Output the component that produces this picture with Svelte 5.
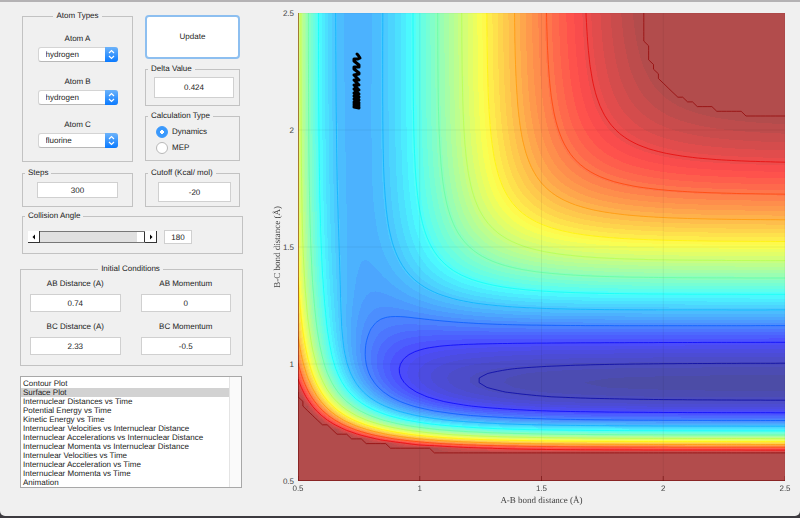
<script lang="ts">
    import { onMount } from "svelte";

    // plot area in user units, both axes run from 0.5 to 2.5 angstrom
    const W = 487;
    const H = 468;
    const MIN = 0.5;
    const MAX = 2.5;
    const STEP = 0.02;
    const N = Math.round((MAX - MIN) / STEP);
    const BANDS = 60;
    const SATO = 0.18;

    const HH = { d: 109.5, beta: 1.942, r: 0.742 };
    const HF = { d: 141.2, beta: 2.2187, r: 0.917 };

    const ticks = [0.5, 1, 1.5, 2, 2.5];
    const elements = ["hydrogen", "fluorine", "chlorine", "oxygen"];
    const plotTypes = [
        "Contour Plot",
        "Surface Plot",
        "Internuclear Distances vs Time",
        "Potential Energy vs Time",
        "Kinetic Energy vs Time",
        "Internuclear Velocities vs Internuclear Distance",
        "Internuclear Accelerations vs Internuclear Distance",
        "Internuclear Momenta vs Internuclear Distance",
        "Internulear Velocities vs Time",
        "Internuclear Acceleration vs Time",
        "Internuclear Momenta vs Time",
        "Animation",
    ];

    let atoms = [
        { name: "A", value: "hydrogen" },
        { name: "B", value: "hydrogen" },
        { name: "C", value: "fluorine" },
    ];
    let initial = [
        { label: "AB Distance (A)", value: "0.74" },
        { label: "AB Momentum", value: "0" },
        { label: "BC Distance (A)", value: "2.33" },
        { label: "BC Momentum", value: "-0.5" },
    ];
    let delta = "0.424";
    let calcType = "Dynamics";
    let steps = "300";
    let cutoff = "-20";
    let angle = 180;
    let canvas: HTMLCanvasElement;

    const trajectory = [
        [59, 41], [60, 42], [62, 45], [60, 46], [56, 46], [56, 48], [61, 52],
        [61, 54], [56, 54], [56, 56], [61, 60], [61, 61], [56, 62], [61, 67],
        [56, 67], [61, 72], [56, 72], [61, 77], [56, 76], [61, 81], [56, 80],
        [61, 84], [56, 83], [61, 87], [56, 86], [61, 90], [56, 89], [61, 92],
        [56, 91], [61, 94], [56, 93], [61, 95], [56, 94],
    ];

    function bond({ d, beta, r }, x: number) {
        const e = Math.exp(-beta * (x - r));
        const singlet = d * (e * e - 2 * e);
        const triplet = (d / 2) * (e * e + 2 * e) * ((1 - SATO) / (1 + SATO));
        return [(singlet + triplet) / 2, (singlet - triplet) / 2];
    }

    function potential(ab: number, bc: number) {
        const [q1, j1] = bond(HH, ab);
        const [q2, j2] = bond(HF, bc);
        const [q3, j3] = bond(HF, ab + bc);
        const j = (j1 - j2) ** 2 + (j2 - j3) ** 2 + (j3 - j1) ** 2;
        return q1 + q2 + q3 - Math.sqrt(j / 2);
    }

    function makeGrid(top: number) {
        const rows = [];
        for (let j = 0; j <= N; j++) {
            const row = [];
            for (let i = 0; i <= N; i++) {
                row.push(Math.min(top, potential(MIN + i * STEP, MIN + j * STEP)));
            }
            rows.push(row);
        }
        return rows;
    }

    function jet(t: number) {
        const c = (m: number) =>
            Math.round(255 * Math.max(0, Math.min(1, 1.5 - Math.abs(4 * t - m))));
        return [c(3), c(2), c(1)];
    }

    // marching squares, every cell adds its own short segments
    function contour(grid: number[][], level: number) {
        let d = "";
        const px = (i: number) => ((i / N) * W).toFixed(1);
        const py = (j: number) => (H - (j / N) * H).toFixed(1);
        for (let j = 0; j < N; j++) {
            for (let i = 0; i < N; i++) {
                const corners = [
                    [i, j, grid[j][i]],
                    [i + 1, j, grid[j][i + 1]],
                    [i + 1, j + 1, grid[j + 1][i + 1]],
                    [i, j + 1, grid[j + 1][i]],
                ];
                const hits = [];
                for (let k = 0; k < 4; k++) {
                    const [x1, y1, v1] = corners[k];
                    const [x2, y2, v2] = corners[(k + 1) % 4];
                    if (v1 < level !== v2 < level) {
                        const t = (level - v1) / (v2 - v1);
                        hits.push(`${px(x1 + t * (x2 - x1))} ${py(y1 + t * (y2 - y1))}`);
                    }
                }
                for (let k = 0; k + 1 < hits.length; k += 2) {
                    d += `M${hits[k]}L${hits[k + 1]}`;
                }
            }
        }
        return d;
    }

    const top = -22.6;
    const bottom = -141.2;
    const shade = (v: number) => (v - bottom) / (top + 2 - bottom);
    const grid = makeGrid(top);
    const lines = [top, ...Array.from({ length: 11 }, (_, k) => -32.8 - 10.4 * k)].map(
        (level) => ({
            d: contour(grid, level),
            color: `rgb(${jet(shade(level)).join()})`,
        })
    );

    onMount(() => {
        const ctx = canvas.getContext("2d");
        const img = ctx.createImageData(W, H);
        for (let y = 0; y < H; y++) {
            for (let x = 0; x < W; x++) {
                const gx = ((x + 0.5) / W) * N;
                const gy = (1 - (y + 0.5) / H) * N;
                const i = Math.floor(gx);
                const j = Math.floor(gy);
                const u = gx - i;
                const w = gy - j;
                const v =
                    (grid[j][i] * (1 - u) + grid[j][i + 1] * u) * (1 - w) +
                    (grid[j + 1][i] * (1 - u) + grid[j + 1][i + 1] * u) * w;
                const rgb = jet(Math.round(shade(v) * BANDS) / BANDS);
                const o = (y * W + x) * 4;
                for (let k = 0; k < 3; k++) {
                    img.data[o + k] = rgb[k] * 0.7 + 76;
                }
                img.data[o + 3] = 255;
            }
        }
        ctx.putImageData(img, 0, 0);
    });

    const pos = (v: number, size: number) => ((v - MIN) / (MAX - MIN)) * size;
</script>

<main>
    <form class="controls" on:submit|preventDefault>
        <div class="row">
            <fieldset class="atoms">
                <legend class="center">Atom Types</legend>
                {#each atoms as atom}
                    <label>
                        <span>Atom {atom.name}</span>
                        <span class="popup">
                            <select bind:value={atom.value}>
                                {#each elements as element}
                                    <option>{element}</option>
                                {/each}
                            </select>
                            <svg viewBox="0 0 13 15">
                                <path d="M4 6L6.5 3.5L9 6M4 9L6.5 11.5L9 9" />
                            </svg>
                        </span>
                    </label>
                {/each}
            </fieldset>
            <div class="side">
                <button class="update">Update</button>
                <fieldset class="delta">
                    <legend>Delta Value</legend>
                    <div class="field">
                        <input type="text" aria-label="Delta Value" bind:value={delta} />
                    </div>
                </fieldset>
                <fieldset class="calc">
                    <legend>Calculation Type</legend>
                    {#each ["Dynamics", "MEP"] as type}
                        <label>
                            <input type="radio" name="calc" value={type} bind:group={calcType} />
                            {type}
                        </label>
                    {/each}
                </fieldset>
            </div>
        </div>

        <div class="row second">
            <fieldset class="steps">
                <legend>Steps</legend>
                <div class="field">
                    <input type="text" aria-label="Steps" bind:value={steps} />
                </div>
            </fieldset>
            <fieldset class="cutoff">
                <legend>Cutoff (Kcal/ mol)</legend>
                <div class="field">
                    <input type="text" aria-label="Cutoff" bind:value={cutoff} />
                </div>
            </fieldset>
        </div>

        <fieldset class="collision">
            <legend>Collision Angle</legend>
            <div class="angle">
                <div class="slider">
                    <button type="button" aria-label="Decrease angle" on:click={() => (angle -= 1)}>
                        <svg viewBox="0 0 12 12"><path d="M4.5 6L7 3.5V8.5Z" /></svg>
                    </button>
                    <input type="range" min="0" max="180" aria-label="Collision Angle" bind:value={angle} />
                    <button type="button" aria-label="Increase angle" on:click={() => (angle += 1)}>
                        <svg viewBox="0 0 12 12"><path d="M7.5 6L5 3.5V8.5Z" /></svg>
                    </button>
                </div>
                <input type="text" aria-label="Collision Angle value" bind:value={angle} />
            </div>
        </fieldset>

        <fieldset class="initial">
            <legend class="center">Initial Conditions</legend>
            {#each initial as field}
                <label>
                    {field.label}
                    <input type="text" bind:value={field.value} />
                </label>
            {/each}
        </fieldset>

        <select class="plots" size="12" aria-label="Plot type">
            {#each plotTypes as type}
                <option selected={type === "Surface Plot"}>{type}</option>
            {/each}
        </select>
    </form>

    <figure>
        <div class="ylabel"><span>B-C bond distance (Å)</span></div>
        <div class="yticks">
            {#each [...ticks].reverse() as tick}
                <span>{tick}</span>
            {/each}
        </div>
        <div class="plot">
            <canvas bind:this={canvas} width={W} height={H}></canvas>
            <svg viewBox="0 0 {W} {H}">
                {#each lines as line}
                    <path class="contour" d={line.d} stroke={line.color} />
                {/each}
                {#each ticks as tick}
                    <path class="grid" d="M{pos(tick, W)} 0V{H}M0 {pos(tick, H)}H{W}" />
                    <path class="tick" d="M{pos(tick, W)} {H}v-5" />
                {/each}
                <path class="axis" d="M0.5 0V{H - 0.5}H{W}" />
                <polyline class="trajectory" points={trajectory.join(" ")} />
            </svg>
        </div>
        <div class="xticks">
            {#each ticks as tick}
                <span>{tick}</span>
            {/each}
        </div>
        <figcaption>A-B bond distance (Å)</figcaption>
    </figure>
</main>

<style>
    :global(body) {
        background: #3d3b40;
    }

    main {
        box-sizing: border-box;
        display: flex;
        min-height: calc(100vh - 2px);
        padding: 9px 15px 7px 20px;
        border-top: 2px solid #b4b2b4;
        border-radius: 0 0 5px 5px;
        background: #f0f0f0;
        color: #222;
        font: 8px/10px "Liberation Sans", Arial, sans-serif;
        text-rendering: geometricPrecision;
    }

    .controls {
        flex: none;
        width: 223px;
    }

    .row {
        display: flex;
        gap: 12px;
        padding: 0 3px 0 2px;
    }

    .second {
        margin-top: 6px;
    }

    fieldset {
        box-sizing: border-box;
        min-width: 0;
        margin: 0;
        padding: 0;
        border: 1px solid #c2c2c2;
    }

    legend {
        margin-left: 2px;
        padding: 0 3px;
    }

    legend.center {
        margin: 0 auto;
    }

    input,
    select,
    button {
        box-sizing: border-box;
        margin: 0;
        color: inherit;
        font: inherit;
        text-rendering: inherit;
    }

    input[type="text"] {
        padding: 0;
        border: 1px solid #d0d0d0;
        background: #fff;
        text-align: center;
    }

    .field input {
        display: block;
        width: 100%;
    }

    .atoms {
        width: 111px;
        height: 151px;
        padding-top: 13px;
    }

    .atoms label {
        display: grid;
        justify-items: center;
        gap: 3px;
        margin-bottom: 15px;
    }

    .popup {
        display: grid;
        grid-template-columns: 67px 13px;
    }

    .popup select {
        grid-area: 1 / 1 / 2 / 3;
        height: 15px;
        padding: 0 0 0 7px;
        border: 1px solid #d4d4d4;
        border-bottom-color: #b8b8b8;
        border-radius: 3px;
        background: #fff;
        appearance: none;
    }

    .popup svg {
        grid-area: 1 / 2;
        width: 13px;
        height: 15px;
        border-radius: 0 3px 3px 0;
        background: linear-gradient(#6cb3fa, #0a7aff);
        fill: none;
        stroke: #fff;
        stroke-width: 1.2;
        pointer-events: none;
    }

    .side {
        display: flex;
        flex: 1;
        flex-direction: column;
        gap: 5px;
        padding-top: 4px;
    }

    .update {
        height: 44px;
        border: 2px solid #8dbff0;
        border-radius: 4px;
        background: #fff;
    }

    .delta {
        height: 42px;
    }

    .delta .field {
        padding: 3px 5px 0 8px;
    }

    .delta input {
        height: 21px;
    }

    .calc {
        height: 50px;
    }

    .calc label {
        display: flex;
        align-items: center;
        gap: 4px;
        margin: 5px 0 -1px 10px;
    }

    .calc input {
        width: 12px;
        height: 12px;
        border: 1px solid #b8b8b8;
        border-radius: 50%;
        background: #fff;
        appearance: none;
    }

    .calc input:checked {
        border-color: #3b99fc;
        background: radial-gradient(#fff 2px, #3b99fc 2px);
    }

    .steps {
        width: 111px;
        height: 39px;
    }

    .steps .field {
        padding: 4px 14px 0;
    }

    .steps input {
        height: 16px;
    }

    .cutoff {
        flex: 1;
        height: 39px;
    }

    .cutoff .field {
        padding: 4px 8px 0 12px;
    }

    .cutoff input {
        height: 20px;
    }

    .collision {
        height: 43px;
        margin: 4px 0 0 2px;
    }

    .angle {
        display: flex;
        align-items: center;
        gap: 7px;
        padding: 9px 5px 0;
    }

    .angle > input {
        width: 28px;
        height: 14px;
    }

    .slider {
        display: flex;
        width: 129px;
        height: 12px;
    }

    .slider button {
        width: 12px;
        padding: 0;
        border: solid #333;
        border-width: 0 1px 1px 0;
        background: #fff;
    }

    .slider svg {
        display: block;
        width: 12px;
    }

    .slider input {
        flex: 1;
        min-width: 0;
        border: solid #777;
        border-width: 1px 0;
        background: #e0e0e0;
        appearance: none;
    }

    .slider input::-webkit-slider-thumb {
        width: 8px;
        height: 10px;
        border-right: 1px solid #333;
        background: #fff;
        appearance: none;
    }

    .initial {
        display: grid;
        grid-template-columns: 1fr 1fr;
        align-content: start;
        gap: 10px 20px;
        height: 102px;
        margin-top: 10px;
        padding: 5px 11px 0 9px;
    }

    .initial label {
        display: grid;
        gap: 5px;
        text-align: center;
    }

    .initial input {
        width: 100%;
        height: 18px;
    }

    .plots {
        display: block;
        width: 222px;
        height: 112px;
        margin-top: 10px;
        padding: 2px 12px 0 0;
        overflow: hidden;
        border: 1px solid #a8a8a8;
        border-radius: 0;
        background: linear-gradient(to left, #fafafa 11px, #e4e4e4 11px, #e4e4e4 12px, #fff 12px);
        outline: none;
    }

    .plots option {
        min-height: 0;
        padding: 0 2px;
        line-height: 9px;
    }

    .plots option:checked {
        background: #d2d2d2 linear-gradient(#d2d2d2, #d2d2d2);
        color: #222;
    }

    figure {
        display: grid;
        flex: 1;
        grid-template-columns: 16px 12px 1fr;
        align-content: start;
        min-width: 0;
        margin: 2px 0 0 23px;
        color: #444;
    }

    .ylabel {
        display: grid;
        justify-items: end;
        align-items: center;
        font: 9px/10px "Liberation Serif", serif;
    }

    .ylabel span {
        white-space: nowrap;
        writing-mode: vertical-rl;
        transform: rotate(180deg);
    }

    .yticks {
        display: flex;
        flex-direction: column;
        justify-content: space-between;
        text-align: right;
    }

    .yticks span {
        height: 0;
        line-height: 2px;
    }

    .plot {
        display: grid;
        margin-left: 4px;
        aspect-ratio: 487 / 468;
    }

    .plot canvas,
    .plot svg {
        grid-area: 1 / 1;
        width: 100%;
        height: 100%;
    }

    .plot svg {
        fill: none;
    }

    .contour {
        stroke-width: 1;
        opacity: 0.7;
    }

    .grid {
        stroke: #000;
        opacity: 0.06;
    }

    .tick,
    .axis {
        stroke: #600;
        opacity: 0.5;
    }

    .trajectory {
        stroke: #000;
        stroke-width: 3;
        stroke-linecap: round;
        stroke-linejoin: round;
    }

    .xticks {
        display: flex;
        grid-column: 3;
        justify-content: space-between;
        margin: 3px 0 0 4px;
    }

    .xticks span {
        display: flex;
        justify-content: center;
        width: 0;
    }

    figcaption {
        grid-column: 3;
        margin-left: 4px;
        font: 9px/12px "Liberation Serif", serif;
        text-align: center;
    }
</style>
